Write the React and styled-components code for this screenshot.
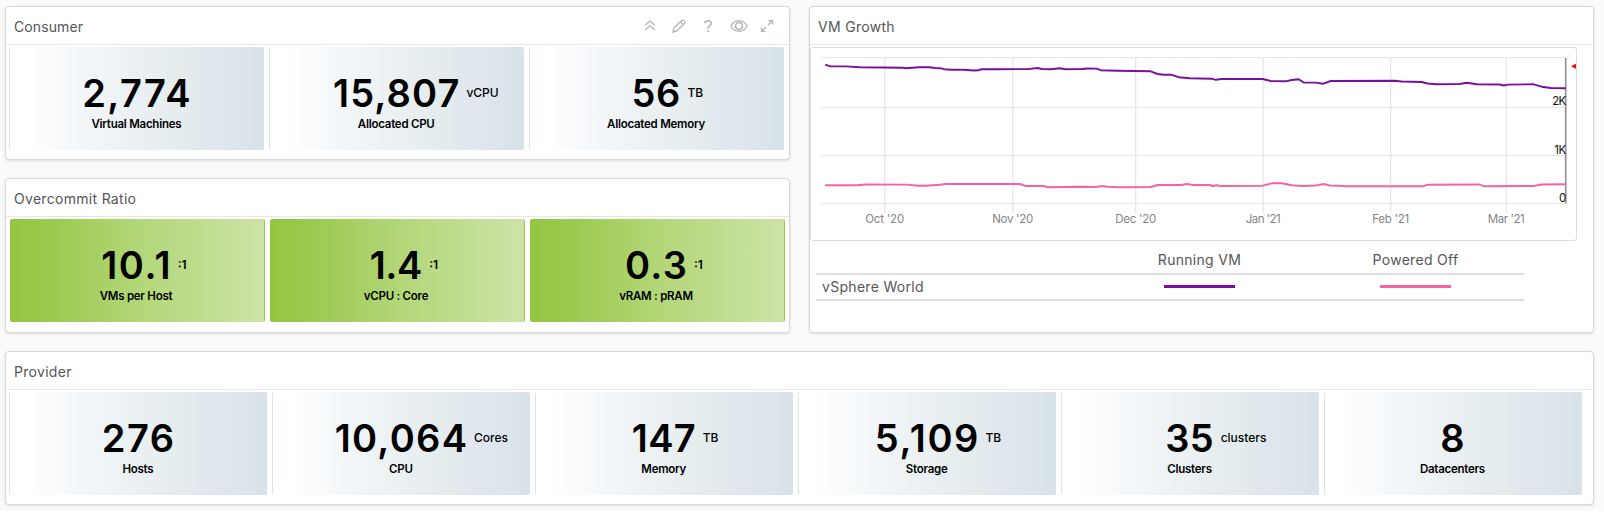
import React from "react";
import styled, { createGlobalStyle, css } from "styled-components";

const FONT = `Inter, "Liberation Sans", sans-serif`;
const PURPLE = "#780f9f";
const PINK = "#f8629f";

const GlobalStyle = createGlobalStyle`
  body {
    margin: 0;
    background: #fff;
    font-family: ${FONT};
  }
`;

const Page = styled.main`
  box-sizing: border-box;
  width: 1604px;
  height: 511px;
  padding: 6px 10px 0 5px;
  background: #fafafa;
  display: grid;
  grid-template-columns: 785px 785px;
  grid-template-rows: 154px 155px 154px;
  column-gap: 19px;
  row-gap: 18px;
`;

const Panel = styled.section`
  box-sizing: border-box;
  min-width: 0;
  border: 1px solid #d8d8d8;
  border-radius: 4px;
  background: #fff;
  box-shadow: 0 1px 3px rgba(0, 0, 0, 0.12);
  ${(p) => p.$tall && css`grid-column: 2; grid-row: 1 / 3;`}
  ${(p) => p.$wide && css`grid-column: 1 / 3;`}
`;

const PanelHeader = styled.header`
  box-sizing: border-box;
  height: 38px;
  padding: 0 9.5px 0 8px;
  border-bottom: 1px solid #e8e8e8;
  display: flex;
  align-items: center;
  justify-content: space-between;
`;

const PanelTitle = styled.h2`
  margin: 3px 0 0;
  font-size: 14px;
  line-height: 18px;
  font-weight: 400;
  letter-spacing: ${(p) => p.$tracking ?? 0.3}px;
  color: #565656;
`;

const Tools = styled.div`
  display: flex;
  align-items: center;
  margin-top: 1px;
  color: #b4b4b4;
  svg {
    display: block;
    fill: none;
    stroke: currentColor;
    stroke-width: 1.3;
  }
`;

const ToolButton = styled.button`
  display: flex;
  justify-content: center;
  width: ${(p) => p.$width}px;
  padding: 0;
  border: 0;
  background: none;
  color: inherit;
`;

const TileRow = styled.div`
  display: grid;
  grid-template-columns: repeat(${(p) => p.$count}, ${(p) => p.$size}px);
  gap: 5px;
  padding: 2px 0 0 ${(p) => (p.$green ? 3.8 : 3.3)}px;
`;

const Tile = styled.article`
  box-sizing: border-box;
  height: 103px;
  padding: 22px 1.6px 0 0;
  color: #000;
  border-radius: 2px;
  ${(p) =>
    p.$green
      ? css`
          background: linear-gradient(90deg, #94c642 0%, #99c94c 14%, #b3d779 52%, #cde3a6 100%);
          border-right: 1px solid #98c94f;
        `
      : css`
          background: linear-gradient(90deg, #fff 6%, #f1f5f8 32%, #e3ebed 70%, #e0e7ee 78%, #dde5ec 90%, #d8e3e9 97%);
          border-left: 1px solid #d9e4ea;
        `}
`;

const Reading = styled.div`
  display: grid;
  grid-template-columns: 1fr auto 1fr;
  height: 48px;
`;

const Value = styled.strong`
  grid-column: 2;
  font-size: 38px;
  line-height: 48px;
  font-weight: 600;
  letter-spacing: ${(p) => p.$tracking}px;
  margin-right: ${(p) => -p.$tracking}px;
`;

const Unit = styled.span`
  grid-column: 3;
  padding-left: 7px;
  font-size: 12px;
  line-height: 47px;
  font-weight: ${(p) => (p.$bold ? 600 : 500)};
`;

const Label = styled.div`
  margin-top: -1px;
  text-align: center;
  font-size: 11.5px;
  line-height: 16px;
  font-weight: 600;
  letter-spacing: -0.25px;
`;

const ChartFrame = styled.div`
  box-sizing: border-box;
  width: 767px;
  height: 194px;
  margin: 2px 0 0 0;
  border: 1px solid #dcdcdc;
  border-radius: 3px;
  svg {
    display: block;
  }
  text {
    font-family: ${FONT};
    font-size: 11.5px;
  }
`;

const Legend = styled.div`
  display: grid;
  grid-template-columns: 276.5px 216px 216px;
  width: 708.5px;
  margin: 5.5px 0 0 5.5px;
  font-size: 14px;
  letter-spacing: 0.3px;
  color: #565656;
`;

const LegendCell = styled.div`
  box-sizing: border-box;
  height: ${(p) => (p.$head ? 28 : 26)}px;
  border-bottom: 2px solid #dedede;
  display: flex;
  align-items: center;
  justify-content: ${(p) => (p.$start ? "flex-start" : "center")};
  padding: ${(p) => (p.$start ? "0 0 0 6.5px" : "0 1px 0 0")};
`;

const Swatch = styled.span`
  width: 71px;
  height: 3px;
  background: ${(p) => p.$color};
`;

const consumer = [
  { value: "2,774", label: "Virtual Machines", tracking: 1.4 },
  { value: "15,807", unit: "vCPU", label: "Allocated CPU", tracking: 1.15 },
  { value: "56", unit: "TB", label: "Allocated Memory", tracking: 0.6 },
];
const overcommit = [
  { value: "10.1", unit: ":1", label: "VMs per Host", tracking: 1.5 },
  { value: "1.4", unit: ":1", label: "vCPU : Core", tracking: -0.5 },
  { value: "0.3", unit: ":1", label: "vRAM : pRAM", tracking: 1.2 },
];
const provider = [
  { value: "276", label: "Hosts", tracking: 1.5 },
  { value: "10,064", unit: "Cores", label: "CPU", tracking: 1.3 },
  { value: "147", unit: "TB", label: "Memory", tracking: 0.4 },
  { value: "5,109", unit: "TB", label: "Storage", tracking: 1.6 },
  { value: "35", unit: "clusters", label: "Clusters", tracking: 0.2 },
  { value: "8", label: "Datacenters", tracking: 0 },
];

const months = [
  ["Oct '20", 885, 39],
  ["Nov '20", 1013, 41],
  ["Dec '20", 1136, 41],
  ["Jan '21", 1263.5, 35],
  ["Feb '21", 1391, 37],
  ["Mar '21", 1506.5, 37],
];
const running =
  "825.5,64.7 830,66.2 846,66.4 860,67.3 903,67.8 907,68.3 912,67.8 920,67.3 930,67.3 935,68 941,68.2 944,69.2 952,69.8 964,69.8 974,70.5 979,70.3 981,69.3 1000,69.2 1028,69.1 1038,68 1042,69 1051,69.2 1060,68.3 1066,69.2 1082,69 1088,68.5 1097,68.6 1101,70.2 1118,70.8 1151,71.3 1158,74 1164,74.8 1172,74.8 1179,77.2 1190,78.2 1212,78.7 1216,79.8 1222,79 1263,79 1271,81 1287,81.2 1292,80 1299,79.3 1304,82.5 1316,82.6 1323,83.8 1331,81 1395,80.8 1402,81.5 1422,82 1428,83.5 1436,84.3 1460,84 1467,82.7 1477,84.3 1500,84.5 1504,85.5 1508,84.6 1534,84.3 1542,86.7 1551,88 1566,88.3";
const poweredOff =
  "825.5,185.3 857,185.2 866,184.5 908,184.6 918,185.7 926,185.7 940,184.7 946,184 960,184 1020,184 1026,186 1044,186 1048,187.3 1080,186.8 1097,187 1102,186 1108,186.8 1120,187.2 1151,187 1158,185 1182,185 1187,184 1193,185 1210,185 1213,186 1217,185.2 1221,186 1263,185.7 1272,183.3 1282,183.3 1292,185.2 1302,186 1316,185.5 1324,184 1330,185.5 1340,185.7 1346,186.3 1423,186.3 1428,184.7 1480,184.5 1484,186.2 1534,186 1542,184.5 1566,184.3";

function Tiles({ items, green, size }) {
  return (
    <TileRow $count={items.length} $size={size} $green={green}>
      {items.map((t) => (
        <Tile key={t.label} $green={green}>
          <Reading>
            <Value $tracking={t.tracking}>{t.value}</Value>
            {t.unit && <Unit $bold={green}>{t.unit}</Unit>}
          </Reading>
          <Label>{t.label}</Label>
        </Tile>
      ))}
    </TileRow>
  );
}

function PanelTools() {
  return (
    <Tools>
      <ToolButton $width={28} aria-label="Collapse">
        <svg width="12" height="14" viewBox="0 0 12 14">
          <path d="M1.2 6.200 6 2l4.800 4.200M1.200 11 6 6.800l4.800 4.200" />
        </svg>
      </ToolButton>
      <ToolButton $width={30} aria-label="Edit">
        <svg width="14" height="14" viewBox="0 0 14 14">
          <path d="M1 13l.8-4L9.500 1.500q1-.8 2 0l1 1q.8 1 0 2L5 12zM8.300 2.800l3 3" />
        </svg>
      </ToolButton>
      <ToolButton $width={29} aria-label="Help">
        <svg width="10" height="14" viewBox="0 0 10 14">
          <path d="M1.800 4.200Q2 1.700 5 1.700T8.200 4.400Q8.200 5.700 6.500 6.800T5 9.800M5 11.300v1.700" strokeWidth="1.600" />
        </svg>
      </ToolButton>
      <ToolButton $width={32} aria-label="Preview">
        <svg width="18" height="14" viewBox="0 0 18 14">
          <path d="M.8 7Q4 1.600 9 1.600T17.200 7Q14 12.400 9 12.400T.8 7Z" />
          <circle cx="9" cy="7" r="3.500" strokeWidth="1.600" />
        </svg>
      </ToolButton>
      <ToolButton $width={25} aria-label="Maximize">
        <svg width="14" height="14" viewBox="0 0 14 14">
          <path d="M8.500 1.600h4v4M12.300 1.800 8 6M5.500 12.400h-4v-4M1.700 12.200 6 8" />
        </svg>
      </ToolButton>
    </Tools>
  );
}

function GrowthChart() {
  return (
    <svg width="765" height="192" viewBox="811.300 48 765 192">
      <g stroke="#e3e5e7" strokeWidth="1.200">
        {[57.5, 107.5, 155.5, 203.5].map((y) => (
          <line key={y} x1="822" x2="1566" y1={y} y2={y} />
        ))}
        {months.map(([m, x]) => (
          <line key={m} x1={x} x2={x} y1="57" y2="213" />
        ))}
      </g>
      <line x1="1566" x2="1566" y1="58" y2="203.500" stroke="#949494" strokeWidth="1.700" />
      <g fill="none" strokeWidth="1.900" strokeLinejoin="round">
        <polyline points={running} stroke={PURPLE} />
        <polyline points={poweredOff} stroke={PINK} />
      </g>
      <g fill="#858585" textAnchor="middle">
        {months.map(([m, x, w]) => (
          <text key={m} x={x} y="222.700" textLength={w}>{m}</text>
        ))}
      </g>
      <g fill="#111" textAnchor="end">
        <text x="1566.500" y="105" textLength="14">2K</text>
        <text x="1566.500" y="153.500" textLength="12">1K</text>
        <text x="1566.500" y="201.500">0</text>
      </g>
      <path d="M1571.300 66.300l5-2.500v5z" fill="#f00" />
    </svg>
  );
}

export default function App() {
  return (
    <>
      <GlobalStyle />
      <Page>
        <Panel>
          <PanelHeader>
            <PanelTitle $tracking={0.1}>Consumer</PanelTitle>
            <PanelTools />
          </PanelHeader>
          <Tiles items={consumer} size={254.8} />
        </Panel>
        <Panel $tall>
          <PanelHeader>
            <PanelTitle>VM Growth</PanelTitle>
          </PanelHeader>
          <ChartFrame>
            <GrowthChart />
          </ChartFrame>
          <Legend>
            <LegendCell $head />
            <LegendCell $head>Running VM</LegendCell>
            <LegendCell $head>Powered Off</LegendCell>
            <LegendCell $start>vSphere World</LegendCell>
            <LegendCell><Swatch $color={PURPLE} /></LegendCell>
            <LegendCell><Swatch $color={PINK} /></LegendCell>
          </Legend>
        </Panel>
        <Panel>
          <PanelHeader>
            <PanelTitle>Overcommit Ratio</PanelTitle>
          </PanelHeader>
          <Tiles items={overcommit} size={255} green />
        </Panel>
        <Panel $wide>
          <PanelHeader>
            <PanelTitle>Provider</PanelTitle>
          </PanelHeader>
          <Tiles items={provider} size={257.9} />
        </Panel>
      </Page>
    </>
  );
}
